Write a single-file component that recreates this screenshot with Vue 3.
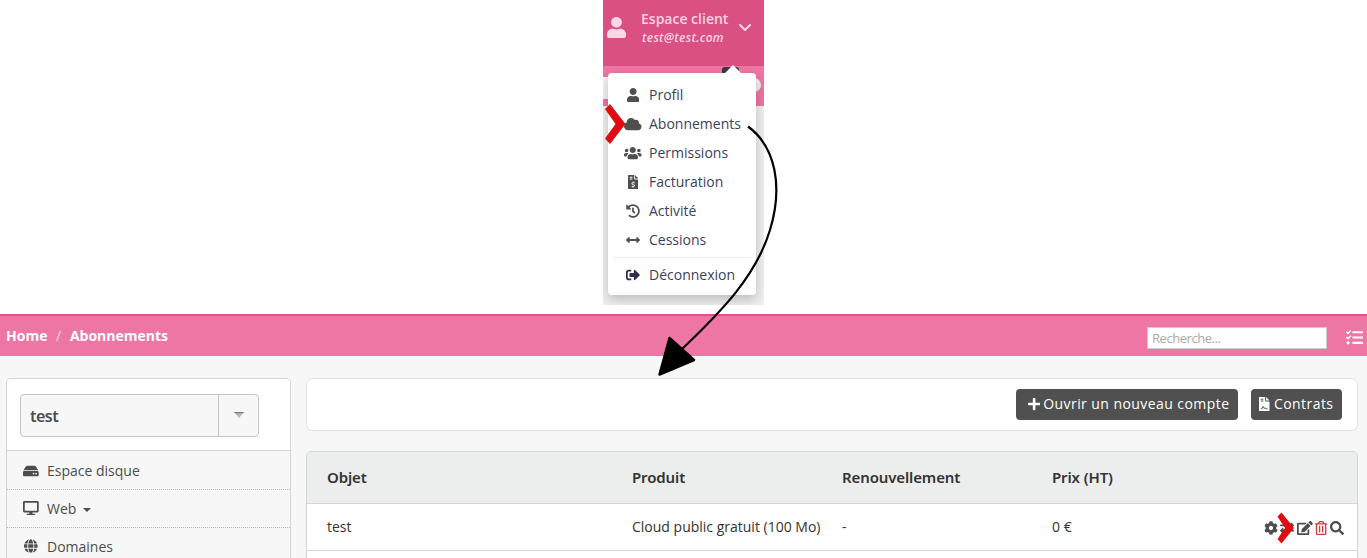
<script setup>
const icons = {
  user: { w: 448, d: 'M224 256c70.7 0 128-57.3 128-128S294.700 0 224 0 96 57.300 96 128s57.300 128 128 128zm89.600 32h-16.700c-22.200 10.200-46.900 16-72.900 16s-50.600-5.800-72.900-16h-16.700C60.200 288 0 348.200 0 422.400V464c0 26.500 21.500 48 48 48h352c26.500 0 48-21.500 48-48v-41.600c0-74.200-60.200-134.400-134.400-134.400z' },
  cloud: { w: 640, d: 'M537.600 226.600c4.100-10.700 6.400-22.400 6.400-34.600 0-53-43-96-96-96-19.700 0-38.100 6-53.300 16.200C367 64.200 315.300 32 256 32c-88.400 0-160 71.600-160 160 0 2.700.1 5.400.2 8.100C40.200 219.800 0 273.200 0 336c0 79.500 64.500 144 144 144h368c70.700 0 128-57.300 128-128 0-61.900-44-113.600-102.400-125.400z' },
  users: { w: 640, d: 'M96 224c35.300 0 64-28.700 64-64s-28.700-64-64-64-64 28.700-64 64 28.700 64 64 64zm448 0c35.300 0 64-28.700 64-64s-28.700-64-64-64-64 28.700-64 64 28.700 64 64 64zm32 32h-64c-17.600 0-33.500 7.100-45.100 18.600 40.300 22.100 68.900 62 75.100 109.400h66c17.700 0 32-14.300 32-32v-32c0-35.300-28.700-64-64-64zm-256 0c61.900 0 112-50.100 112-112S381.900 32 320 32 208 82.100 208 144s50.100 112 112 112zm76.800 32h-8.300c-20.800 10-43.900 16-68.500 16s-47.600-6-68.500-16h-8.300C179.600 288 128 339.600 128 403.200V432c0 26.500 21.500 48 48 48h288c26.500 0 48-21.500 48-48v-28.800c0-63.600-51.600-115.200-115.200-115.200zm-223.700-13.400C161.500 263.100 145.600 256 128 256H64c-35.300 0-64 28.700-64 64v32c0 17.700 14.300 32 32 32h65.900c6.300-47.400 34.900-87.300 75.200-109.400z' },
  invoice: { w: 384, d: 'M24 0h200v128c0 18 14 32 32 32h128v328q0 24-24 24H24q-24 0-24-24V24Q0 0 24 0zM256 0l128 128H256zM64 64v32h96V64zm0 64v32h96v-32zm112 112v26c-61 7-65 75-13 91l48 15c21 8 14 30-4 30h-29c-10 0-21-4-29-10l-25 24c13 11 29 18 47 19v25h32v-25c64-7 66-76 14-92l-48-15c-21-7-14-30 4-30h29c10 0 20 4 28 9l25-24c-13-10-28-16-46-18v-25z' },
  history: { w: 512, d: 'M504 255.500c.3 136.600-111.200 248.400-247.800 248.500-59 0-113.200-20.500-155.800-54.900-11.100-8.900-11.900-25.500-1.800-35.600l11.300-11.300c8.600-8.600 22.400-9.600 31.900-2C173.100 425.100 212.800 440 256 440c101.700 0 184-82.300 184-184S357.700 72 256 72c-48.800 0-93.100 19-126.100 49.900l50.800 50.800c10.100 10.100 2.900 27.300-11.300 27.300H24c-8.800 0-16-7.200-16-16V38.600c0-14.300 17.200-21.400 27.300-11.300L84.700 76.700C129.200 34.100 189.600 8 256 8c136.800 0 247.700 110.800 248 247.500zM323.100 333.900l9.800-12.600c8.200-10.500 6.300-25.500-4.200-33.700L288 256.300V152c0-13.300-10.700-24-24-24h-16c-13.300 0-24 10.700-24 24v135.700l65.400 50.900c10.500 8.100 25.500 6.300 33.700-4.700z' },
  arrows: { w: 512, d: 'M377.900 216H134.100v-46.100c0-21.400-25.900-32.100-41-17L7 239c-9.300 9.300-9.300 24.500 0 34l86.100 86.100c15.100 15.100 41 4.400 41-17V296h243.800v46.100c0 21.400 25.900 32.100 41 17L505 273c9.400-9.400 9.400-24.600 0-34l-86.100-86.100c-15.100-15.100-41-4.400-41 17z' },
  logout: { w: 512, d: 'M497 273L329 441c-15 15-41 4.500-41-17v-96H152c-13.300 0-24-10.700-24-24v-96c0-13.300 10.700-24 24-24h136V88c0-21.400 25.900-32 41-17l168 168c9.300 9.400 9.300 24.600 0 34zM192 436v-40c0-6.600-5.400-12-12-12H96c-17.700 0-32-14.300-32-32V160c0-17.700 14.300-32 32-32h84c6.600 0 12-5.400 12-12V76c0-6.600-5.400-12-12-12H96c-53 0-96 43-96 96v192c0 53 43 96 96 96h84c6.600 0 12-5.400 12-12z' },
  hdd: { w: 576, d: 'M576 304v96c0 26.500-21.500 48-48 48H48c-26.500 0-48-21.500-48-48v-96c0-26.500 21.500-48 48-48h480c26.500 0 48 21.500 48 48zm-48-80c12 0 23 2 34 6L463 86c-9-14-24-22-40-22H153c-16 0-31 8-40 22L14 230c11-4 22-6 34-6zm-48 96c-43 0-43 64 0 64s43-64 0-64zm-96 0c-43 0-43 64 0 64s43-64 0-64z' },
  desktop: { w: 576, d: 'M528 0H48C21.500 0 0 21.500 0 48v320c0 26.500 21.500 48 48 48h192l-16 48h-72c-13.300 0-24 10.700-24 24s10.700 24 24 24h272c13.300 0 24-10.700 24-24s-10.700-24-24-24h-72l-16-48h192c26.500 0 48-21.500 48-48V48c0-26.500-21.500-48-48-48zm-16 352H64V64h448v288z' },
  globe: { w: 496, d: 'M336.500 160C322 70.700 287.800 8 248 8s-74 62.700-88.500 152h177zM152 256c0 22.200 1.200 43.500 3.300 64h185.300c2.100-20.500 3.300-41.800 3.300-64s-1.200-43.500-3.300-64H155.300c-2.100 20.500-3.300 41.800-3.300 64zm324.700-96c-28.600-67.900-86.500-120.400-158-141.600 24.400 33.800 41.200 84.700 50 141.600h108zM177.200 18.400C105.800 39.600 47.800 92.100 19.300 160h108c8.700-56.900 25.500-107.800 49.900-141.600zM487.400 192H372.700c2.100 21 3.300 42.500 3.300 64s-1.200 43-3.300 64h114.600c5.500-20.500 8.600-41.800 8.600-64s-3.100-43.500-8.500-64zM120 256c0-21.500 1.200-43 3.300-64H8.600C3.200 212.500 0 233.800 0 256s3.200 43.500 8.600 64h114.600c-2-21-3.200-42.500-3.200-64zm39.500 96c14.500 89.300 48.700 152 88.500 152s74-62.700 88.500-152h-177zm159.300 141.600c71.400-21.200 129.400-73.700 158-141.600h-108c-8.800 56.900-25.600 107.800-50 141.600zM19.300 352c28.600 67.900 86.500 120.400 158 141.600-24.400-33.800-41.200-84.700-50-141.600h-108z' },
  plus: { w: 448, d: 'M416 208H272V64c0-17.700-14.300-32-32-32h-32c-17.700 0-32 14.300-32 32v144H32c-17.700 0-32 14.300-32 32v32c0 17.700 14.300 32 32 32h144v144c0 17.700 14.300 32 32 32h32c17.700 0 32-14.300 32-32V304h144c17.700 0 32-14.300 32-32v-32c0-17.700-14.300-32-32-32z' },
  contract: { w: 384, d: 'M24 0h200v128c0 18 14 32 32 32h128v328q0 24-24 24H24q-24 0-24-24V24Q0 0 24 0zM256 0l128 128H256zM64 64v32h96V64zm0 64v32h96v-32zm0 272v32h34c20 0 32-10 42-32l14-24 26 56h22c9-12 20-9 29 0 16 12 36 16 58 16h28v-32h-28c-13 0-25-3-32-12-14-15-40-18-59-9l-22-44c-10-20-34-20-44 0l-24 44c-3 4-8 5-17 5z' },
  tasks: { w: 512, d: 'M139.600 35.500a12 12 0 0 0-17 0L58.900 98.800 35.700 76.100a12 12 0 0 0-17 0L3.500 91.400a12 12 0 0 0 0 17l47.600 47.400a12.800 12.800 0 0 0 17.600 0L156 69a12 12 0 0 0 0-17zm0 159.200a12 12 0 0 0-17 0L58.900 258.100l-22.700-22.500a12 12 0 0 0-17 0L3.500 251a12 12 0 0 0 0 17l47 47.200a12.800 12.800 0 0 0 17.700 0L156 228a12 12 0 0 0 0-17zM64 368c-26.500 0-48.600 21.500-48.600 48s22.100 48 48.600 48 48-21.500 48-48-21.500-48-48-48zm432 16H208a16 16 0 0 0-16 16v32a16 16 0 0 0 16 16h288a16 16 0 0 0 16-16v-32a16 16 0 0 0-16-16zm0-320H208a16 16 0 0 0-16 16v32a16 16 0 0 0 16 16h288a16 16 0 0 0 16-16V80a16 16 0 0 0-16-16zm0 160H208a16 16 0 0 0-16 16v32a16 16 0 0 0 16 16h288a16 16 0 0 0 16-16v-32a16 16 0 0 0-16-16z' },
  cog: { w: 512, d: 'M487.400 315.700l-42.600-24.600c4.300-23.200 4.300-47 0-70.200l42.600-24.600c4.900-2.800 7.100-8.600 5.500-14-11.100-35.600-30-67.800-54.700-94.600-3.800-4.100-10-5.100-14.800-2.300L380.800 110c-17.900-15.400-38.500-27.300-60.800-35.100V25.800c0-5.600-3.900-10.500-9.400-11.700-36.700-8.200-74.300-7.800-109.200 0-5.500 1.200-9.400 6.100-9.400 11.700V75c-22.200 7.900-42.800 19.800-60.800 35.100L88.700 85.500c-4.900-2.800-11-1.900-14.800 2.300-24.700 26.700-43.600 58.900-54.700 94.600-1.700 5.400.6 11.200 5.500 14L67.300 221c-4.300 23.200-4.300 47 0 70.200l-42.600 24.600c-4.900 2.800-7.100 8.600-5.500 14 11.100 35.600 30 67.800 54.700 94.600 3.800 4.100 10 5.100 14.800 2.300l42.600-24.600c17.900 15.400 38.500 27.300 60.800 35.100v49.200c0 5.600 3.900 10.500 9.400 11.700 36.700 8.200 74.300 7.800 109.200 0 5.500-1.200 9.400-6.100 9.400-11.700v-49.200c22.200-7.900 42.800-19.800 60.800-35.100l42.600 24.600c4.900 2.800 11 1.900 14.800-2.300 24.700-26.700 43.600-58.900 54.700-94.600 1.500-5.500-.7-11.300-5.600-14.100zM256 336c-44.100 0-80-35.900-80-80s35.900-80 80-80 80 35.900 80 80-35.900 80-80 80z' },
  exchange: { w: 512, d: 'M0 168v-16c0-13.300 10.700-24 24-24h360V80c0-21.400 25.900-32 41-17l80 80c9.400 9.400 9.400 24.600 0 34l-80 80c-15 15-41 4.500-41-17v-48H24c-13.300 0-24-10.700-24-24zm488 152H128v-48c0-21.300-25.900-32.100-41-17L7 335c-9.400 9.400-9.400 24.600 0 34l80 80c15 15 41 4.500 41-17v-48h360c13.300 0 24-10.700 24-24v-16c0-13.300-10.700-24-24-24z' },
  edit: { w: 576, d: 'M402.600 83.200l90.200 90.200c3.800 3.800 3.800 10 0 13.800L274.400 405.600l-92.800 10.300c-12.400 1.400-22.900-9.100-21.500-21.500l10.300-92.800L388.800 83.200c3.800-3.800 10-3.800 13.800 0zm162-22.900l-48.800-48.800c-15.200-15.200-39.900-15.200-55.200 0l-35.400 35.400c-3.800 3.800-3.800 10 0 13.800l90.200 90.200c3.800 3.800 10 3.800 13.800 0l35.400-35.400c15.200-15.300 15.200-40 0-55.200zM384 346.200V448H64V128h229.800c3.200 0 6.200-1.300 8.500-3.500l40-40c7.600-7.600 2.200-20.500-8.500-20.500H48C21.500 64 0 85.500 0 112v352c0 26.500 21.500 48 48 48h352c26.500 0 48-21.500 48-48V306.200c0-10.700-12.900-16-20.500-8.500l-40 40c-2.200 2.300-3.500 5.300-3.500 8.500z' },
  trash: { w: 448, d: 'M268 416h24a12 12 0 0 0 12-12V188a12 12 0 0 0-12-12h-24a12 12 0 0 0-12 12v216a12 12 0 0 0 12 12zM432 80h-82.400l-34-56.700A48 48 0 0 0 274.400 0H173.600a48 48 0 0 0-41.200 23.300L98.400 80H16A16 16 0 0 0 0 96v16a16 16 0 0 0 16 16h16v336a48 48 0 0 0 48 48h288a48 48 0 0 0 48-48V128h16a16 16 0 0 0 16-16V96a16 16 0 0 0-16-16zM171.800 50.900A6 6 0 0 1 177 48h94a6 6 0 0 1 5.200 2.900L293.600 80H154.400zM368 464H80V128h288zm-212-48h24a12 12 0 0 0 12-12V188a12 12 0 0 0-12-12h-24a12 12 0 0 0-12 12v216a12 12 0 0 0 12 12z' },
  loupe: { w: 512, d: 'M505 442.700L405.300 343c-4.500-4.500-10.600-7-17-7H372c27.600-35.300 44-79.700 44-128C416 93.100 322.900 0 208 0S0 93.100 0 208s93.100 208 208 208c48.300 0 92.700-16.400 128-44v16.300c0 6.400 2.500 12.500 7 17l99.700 99.700c9.400 9.400 24.600 9.400 33.900 0l28.300-28.300c9.400-9.400 9.400-24.600.1-34zM208 336c-70.700 0-128-57.200-128-128 0-70.700 57.200-128 128-128 70.700 0 128 57.200 128 128 0 70.700-57.200 128-128 128z' },
}
const menu = [
  { icon: 'user', label: 'Profil' },
  { icon: 'cloud', label: 'Abonnements' },
  { icon: 'users', label: 'Permissions' },
  { icon: 'invoice', label: 'Facturation' },
  { icon: 'history', label: 'Activité' },
  { icon: 'arrows', label: 'Cessions' },
]
const side = [
  { icon: 'hdd', label: 'Espace disque' },
  { icon: 'desktop', label: 'Web', caret: true },
  { icon: 'globe', label: 'Domaines' },
]
const actions = ['cog', 'exchange', 'edit', 'trash', 'loupe']
const box = (n) => `0 0 ${icons[n].w} 512`
</script>

<template>
  <div class="page">
    <section class="account">
      <header class="client">
        <svg class="avatar" :viewBox="box('user')" preserveAspectRatio="none"><path :d="icons.user.d" /></svg>
        <div class="who"><span class="name">Espace client</span><em>test@test.com</em></div>
        <svg class="chev" viewBox="0 0 14 10"><path d="M2 2l5 5 5-5" /></svg>
      </header>
      <div class="band"><i class="dark"></i><i class="field"></i><i class="knob"></i></div>
      <nav class="menu">
        <a v-for="m in menu" :key="m.label" class="entry">
          <span class="slot"><svg class="fa" :viewBox="box(m.icon)"><path fill-rule="evenodd" :d="icons[m.icon].d" /></svg></span>
          <span>{{ m.label }}</span>
        </a>
        <hr />
        <a class="entry out">
          <span class="slot"><svg class="fa" :viewBox="box('logout')"><path :d="icons.logout.d" /></svg></span>
          <span>Déconnexion</span>
        </a>
      </nav>
    </section>

    <div class="topbar">
      <div class="crumbs"><b>Home</b><span>/</span><b>Abonnements</b></div>
      <div class="tools">
        <div class="search">Recherche...</div>
        <svg class="tasks" :viewBox="box('tasks')"><path :d="icons.tasks.d" /></svg>
      </div>
    </div>

    <div class="content">
      <aside class="side">
        <div class="pick">
          <div class="select"><span class="value">test</span><span class="drop"><svg viewBox="0 0 10 6"><path d="M0 0h10L5 6z" fill="#b9b9bd" /><path d="M0 0h10L9 1.300H1z" fill="#77777c" /></svg></span></div>
        </div>
        <a v-for="s in side" :key="s.label" class="link">
          <span class="pic"><svg class="fa" :viewBox="box(s.icon)"><path fill-rule="evenodd" :d="icons[s.icon].d" /></svg></span>
          <span>{{ s.label }}</span><i v-if="s.caret" class="caret"></i>
        </a>
      </aside>
      <main class="main">
        <div class="bar">
          <button class="btn open"><svg class="fa" :viewBox="box('plus')"><path :d="icons.plus.d" /></svg><span>Ouvrir un nouveau compte</span></button>
          <button class="btn deals"><svg class="fa" :viewBox="box('contract')"><path fill-rule="evenodd" :d="icons.contract.d" /></svg><span>Contrats</span></button>
        </div>
        <div class="table">
          <div class="row head"><span>Objet</span><span>Produit</span><span>Renouvellement</span><span>Prix (HT)</span></div>
          <div class="row">
            <span>test</span><span>Cloud public gratuit (100 Mo)</span><span>-</span><span>0 €</span>
            <span class="acts"><svg v-for="a in actions" :key="a" class="fa" :class="a" :viewBox="box(a)"><path fill-rule="evenodd" :d="icons[a].d" /></svg></span>
          </div>
        </div>
      </main>
    </div>

    <svg class="marks" viewBox="0 0 1367 558">
      <path d="M748 126.500C776 147 783 187 770 230C756 276 722 311 681 350" fill="none" stroke="#000" stroke-width="2.200" />
      <path d="M669.500 338L694 360L659.500 374.500z" stroke="#000" stroke-width="2.500" stroke-linejoin="round" />
      <path d="M605 109L610 104L625.500 124L610 144L605 138.500L615.500 124z" fill="#df0d12" />
      <path d="M1277.500 516.500L1281.500 512.500L1294 528L1281.500 543.500L1277.500 539L1285 528z" fill="#df0d12" />
    </svg>
  </div>
</template>

<style>
body { margin: 0; background: #fff; overflow: hidden; }
</style>
<style scoped>
.page { position: relative; width: 1367px; height: 558px; overflow: hidden; background: #fff; font-family: "Open Sans", sans-serif; font-size: 14px; color: #333; display: flex; flex-direction: column; }
.page * { box-sizing: border-box; }
svg { display: block; flex: none; }
.fa { height: 14px; fill: currentColor; }
.account { position: relative; width: 161px; height: 305px; margin: 0 0 9px 603px; background: #f0f0f0; flex: none; overflow: hidden; }
.client { height: 66px; background: #db5083; display: flex; align-items: flex-start; color: #f9d3e1; }
.avatar { width: 19px; height: 21px; fill: #fad7e4; margin: 17px 0 0 4px; }
.who { display: flex; flex-direction: column; width: 88px; margin: 9px 0 0 15px; line-height: 19px; white-space: nowrap; }
.name { font-size: 14px; font-weight: 600; }
.who em { font-size: 12px; font-weight: 600; line-height: 19px; padding-left: 1px; letter-spacing: .3px; }
.chev { width: 14px; height: 10px; margin: 23px 0 0 9px; fill: none; stroke: #fad7e4; stroke-width: 2; stroke-linecap: round; stroke-linejoin: round; }
.band { position: relative; height: 40px; background: #ed76a4; }
.band i { position: absolute; }
.dark { left: 119px; top: 1px; width: 17px; height: 12px; background: #3a3a3a; border-radius: 3px; }
.field { left: 0; top: 11px; width: 8px; height: 22px; background: #f3f3f3; }
.knob { left: 139px; top: 12px; width: 19px; height: 14px; border-radius: 7px; background: #eee; }
.menu { position: absolute; left: 5px; top: 73px; width: 148px; height: 222px; padding-top: 7px; background: #fff; border-radius: 4px; box-shadow: 0 5px 12px rgba(0,0,0,.22); color: #3b3f5c; }
.menu::before { content: ""; position: absolute; left: 117px; top: -8px; border: 8px solid transparent; border-top: 0; border-bottom-color: #fff; }
.entry { display: flex; align-items: center; height: 29px; padding-left: 15px; white-space: nowrap; }
.slot { width: 20px; margin-right: 6px; display: flex; justify-content: center; color: #4f4f4f; }
.menu hr { height: 1px; margin: 3px 5px 2px; border: 0; background: #e9ebed; }
.out .slot { color: #2c2d4f; }
.topbar { height: 42px; flex: none; border-top: 2px solid #e64f87; background: #ed76a4; display: flex; justify-content: space-between; }
.crumbs { display: flex; padding-left: 6px; line-height: 40px; color: #fff; }
.crumbs span { width: 22.500px; text-align: center; color: #fbdce8; }
.tools { display: flex; padding: 11px 4px 0 0; gap: 19px; }
.search { width: 180px; height: 22px; border: 1px solid #ccc; background: #fff; color: #aaa; font-size: 13px; letter-spacing: -.45px; line-height: 20px; padding-left: 4px; }
.tasks { width: 17px; height: 17px; fill: #fff; margin-top: 2px; }
.content { flex: 1; min-height: 0; background: #f7f7f7; padding: 22px 9px 0 6px; display: flex; gap: 15px; }
.side { flex: none; width: 285px; height: 220px; border: 1px solid #d4d4d4; border-radius: 5px; color: #4d4d4d; overflow: hidden; }
.pick { height: 72px; background: #fff; border-bottom: 1px solid #d4d4d4; padding: 15px 13px; }
.select { display: flex; width: 239px; height: 43px; border: 1px solid #c4c4c4; border-radius: 4px; background: #f7f7f7; }
.value { width: 198px; border-right: 1px solid #c4c4c4; padding-left: 9px; font: 600 16px/43px "Noto Sans", sans-serif; letter-spacing: -.5px; }
.drop { flex: 1; padding: 17px 0 0 15px; }
.drop svg { width: 10px; height: 6px; }
.link { display: flex; align-items: center; height: 38px; padding: 0 0 1px 15px; border-bottom: 1px dotted #b8b8b8; }
.link:first-of-type { height: 39px; padding: 1px 0 0 15px; }
.pic { width: 18px; margin-right: 7px; display: flex; justify-content: center; }
.caret { margin: 4px 0 0 7px; border: 4px solid transparent; border-top-color: #4d4d4d; border-bottom: 0; }
.main { flex: 1; min-width: 0; }
.bar { height: 53px; background: #fff; border: 1px solid #e2e2e2; border-radius: 6px; display: flex; justify-content: flex-end; gap: 13px; padding: 10px 15px 0 0; }
.btn { display: flex; align-items: center; height: 31px; border: 0; border-radius: 4px; background: #505050; color: #fff; font: 14px "Open Sans", sans-serif; letter-spacing: .43px; white-space: nowrap; padding: 0 0 2px; }
.open { width: 222px; padding-left: 12px; gap: 3px; }
.deals { width: 91px; padding-left: 8px; gap: 4.500px; }
.table { margin-top: 20px; height: 150px; border: 1px solid #d3d6d6; border-radius: 5px; background: #fff; overflow: hidden; }
.row { display: grid; grid-template-columns: 305px 210px 210px 212px 1fr; align-items: center; height: 47px; padding: 0 0 1px 20px; border-bottom: 1px solid #d3d6d6; white-space: nowrap; }
.head { height: 52px; background: #eceeed; font: 600 15px "Noto Sans", sans-serif; letter-spacing: -.12px; }
.acts { display: flex; align-items: center; gap: 2.400px; color: #4d4d4d; padding-top: 2px; }
.trash { color: #d0393e; }
.marks { position: absolute; left: 0; top: 0; width: 1367px; height: 558px; }
</style>
